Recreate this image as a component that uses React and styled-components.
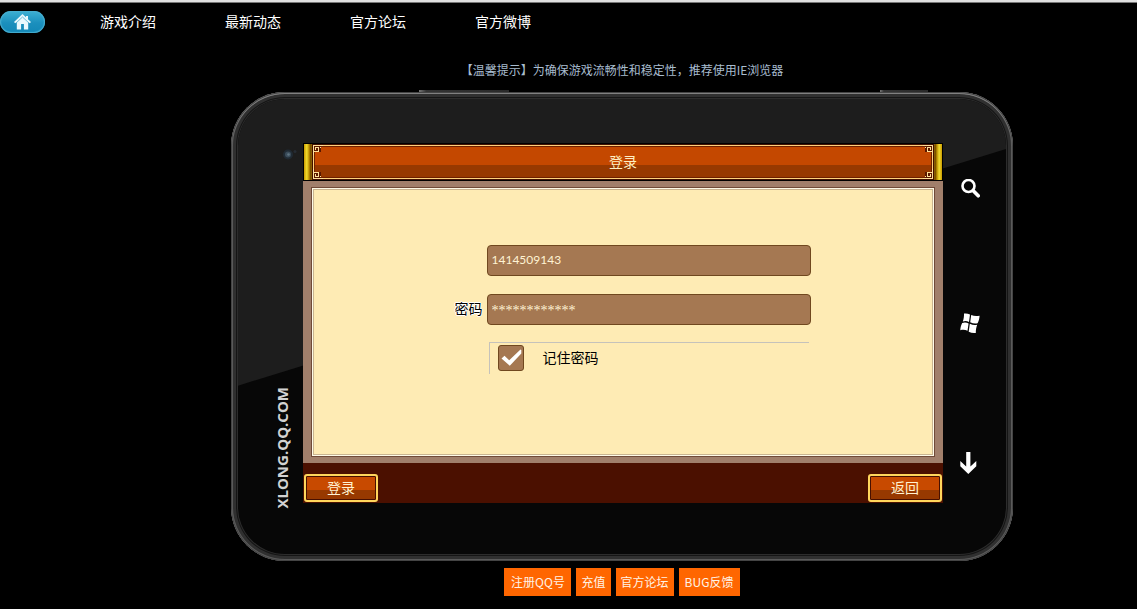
import React from "react";
import styled, { createGlobalStyle } from "styled-components";

const GlobalStyle = createGlobalStyle`
  * { box-sizing: border-box; }
  body {
    margin: 0;
    background: #000;
    color: #fff;
    font-family: "Noto Sans CJK SC", sans-serif;
    font-size: 14px;
  }
  a { color: inherit; text-decoration: none; }
`;

const Page = styled.div`
  border-top: 2px solid #e0e0e0;
  box-shadow: inset 0 1px 0 #777;
`;

const Nav = styled.nav`
  display: flex;
  align-items: center;
  height: 40px;
`;

const HomeLink = styled.a`
  display: flex;
  align-items: center;
  justify-content: center;
  width: 45px;
  height: 22px;
  margin-right: 55px;
  border-radius: 11px;
  background: linear-gradient(#3db0d3, #1b8fbd 55%, #1287b6);
  box-shadow: inset 0 0 1px 1px #48aed0;
`;

const NavLink = styled.a`
  width: 125px;
  padding-bottom: 2px;
  line-height: 20px;
`;

const Main = styled.main`
  display: flex;
  flex-direction: column;
  align-items: center;
  padding-left: 107px;
`;

const Tip = styled.p`
  margin: 18px 0 12px;
  font-size: 12px;
  line-height: 20px;
  color: #a8bccf;
`;

const Device = styled.section`
  position: relative;
  display: flex;
  width: 100%;
  max-width: 782px;
  padding: 51px 0 58px;
  border-radius: 54px;
  background: #070707;
  box-shadow:
    inset 0 0 0 1px #444,
    inset 0 1px 0 1px #808080,
    inset 0 0 0 2px #5a5a5a,
    inset 0 0 0 5px #303030,
    inset 0 0 0 6px #151515,
    inset 0 0 0 7px #2c2c2c;

  &::before {
    content: "";
    position: absolute;
    inset: 7px;
    border-radius: 47px;
    background: #1d1d1d;
    clip-path: polygon(0 0, 100% 0, 100% 11%, 0 63%);
  }
`;

const SideKey = styled.span`
  position: absolute;
  top: -2px;
  left: ${(p) => p.$left};
  width: ${(p) => p.$width};
  height: 2px;
  background: linear-gradient(90deg, #777, #333 8%, #2a2a2a);
`;

const LeftRail = styled.div`
  position: relative;
  display: flex;
  flex-direction: column;
  align-items: flex-end;
  justify-content: space-between;
  width: 72px;
  padding: 4px 6px 0 0;
`;

const Brand = styled.span`
  writing-mode: vertical-rl;
  transform: rotate(180deg);
  margin: 0 6px -6px 0;
  font-family: "Open Sans", sans-serif;
  font-size: 15px;
  font-weight: 700;
  line-height: 18px;
  color: #d2d2d2;
`;

const RightRail = styled.div`
  position: relative;
  display: flex;
  flex-direction: column;
  align-items: center;
  justify-content: space-between;
  width: 70px;
  padding: 36px 16px 29px 0;
`;

const Screen = styled.form`
  position: relative;
  display: flex;
  flex: 1;
  flex-direction: column;
  border-top: 1px solid #000;
  background: #a17f6b;
`;

const TitleBar = styled.header`
  display: flex;
  height: 37px;
  padding: 0 1px 1px;
  background: #000;
`;

const Pillar = styled.span`
  width: 8px;
  background: linear-gradient(${(p) => p.$to}, #c89a00, #f2dc2c 35%, #b88900 65%, #6b4600 85%, #9b6a00);
`;

const TitlePanel = styled.div`
  position: relative;
  flex: 1;
  border: 1px solid #421000;
  background: linear-gradient(#c44800 60%, #973900 60%);
  box-shadow: inset 0 0 0 1px #ffd27a, inset 0 0 0 2px #6e2000;
`;

const Title = styled.h1`
  margin: 0;
  font-size: 14px;
  font-weight: 400;
  line-height: 32px;
  text-align: center;
  color: #fff0c4;
`;

const CornerSvg = styled.svg`
  position: absolute;
  ${(p) => p.$v}: 0;
  ${(p) => p.$h}: 0;
  transform: scale(${(p) => (p.$h === "right" ? -1 : 1)}, ${(p) => (p.$v === "bottom" ? -1 : 1)});
`;

const Panel = styled.div`
  display: flex;
  justify-content: center;
  margin: 6px 8px;
  padding: 57px 0 82px 19px;
  border: 1px solid #704a38;
  background: #feebb4;
  box-shadow: inset 0 0 0 1px #fffbe8, inset 0 0 0 2px #c9b591;
`;

const Fields = styled.div`
  display: grid;
  grid-template-columns: 32px 324px;
  row-gap: 18px;
  align-items: center;
`;

const FieldLabel = styled.label`
  grid-column: 1;
  padding-bottom: 4px;
  line-height: 20px;
  color: #000;
  text-shadow: 1px 0 #fff, -1px 0 #fff, 0 1px #fff, 0 -1px #fff;
`;

const TextInput = styled.input`
  grid-column: 2;
  width: 100%;
  height: 31px;
  padding: ${(p) => (p.$masked ? "2px 4px 0" : "0 4px 2px")};
  border: 1px solid #70481f;
  border-radius: 4px;
  outline: none;
  background: #a57852;
  color: #fff3d2;
  font-family: ${(p) => (p.$masked ? '"Liberation Serif", serif' : "Lato, sans-serif")};
  font-size: ${(p) => (p.$masked ? "14px" : "12px")};
`;

const Remember = styled.div`
  grid-column: 2;
  display: flex;
  align-items: flex-start;
  gap: 19px;
  height: 32px;
  margin: -1px 2px 0;
  padding: 2px 0 0 8px;
  border-top: 1px solid #c5c2bb;
  border-left: 1px solid #c5c2bb;
  line-height: 24px;
  color: #000;
`;

const CheckWrap = styled.span`
  position: relative;
  display: flex;
`;

const CheckBox = styled.input`
  appearance: none;
  width: 26px;
  height: 26px;
  margin: 0;
  border: 1px solid #70481f;
  border-radius: 3px;
  background: #a57852;

  & + svg { display: none; }
  &:checked + svg { display: block; }
`;

const Tick = styled.svg`
  position: absolute;
  inset: 0;
  pointer-events: none;
`;

const ActionBar = styled.footer`
  display: flex;
  justify-content: space-between;
  padding: 11px 1px 1px;
  background: #4b1000;
`;

const ActionButton = styled.button`
  width: 74px;
  height: 28px;
  padding: 0 0 2px;
  border: 2px solid #ffd65c;
  border-radius: 3px;
  background: linear-gradient(#c84a00 60%, #973900 60%);
  box-shadow: inset 0 0 0 1px #481000;
  color: #fff3d2;
  font: 400 14px/20px "Noto Sans CJK SC", sans-serif;
`;

const Links = styled.nav`
  display: flex;
  gap: 5px;
  padding: 7px 0 12px;
`;

const LinkButton = styled.a`
  min-width: ${(p) => p.$min || "0"};
  padding: 0 5px;
  background: #ff6600;
  font-size: 12px;
  line-height: 28px;
  text-align: center;
  color: #fff3e6;
`;

const Corner = (props) => (
  <CornerSvg width="10" height="10" viewBox="0 0 10 10" fill="none" stroke="#ffe09a" shapeRendering="crispEdges" aria-hidden="true" {...props}>
    <rect width="8" height="7" fill="#5a1800" stroke="none" />
    <path d="M0 .5H10M.5 0V10M0 6.5H6M5.5 7V2M6 2.5H2M2.5 2V5M7.5 2V3" />
  </CornerSvg>
);

const HomeIcon = () => (
  <svg width="17" height="16" viewBox="0 0 17 16" aria-hidden="true">
    <path fill="#e9f8fd" d="M8.5 0 0 8l1.2 1.3L2.8 8v7.5h4.3V10h2.8v5.5h4.3V8l1.6 1.3L17 8l-3-2.8V2h-2v1.3z" />
    <path fill="none" stroke="#4eb0d1" strokeWidth=".8" d="M2.5 8.6 8.5 3l6 5.6" />
  </svg>
);

const SearchIcon = () => (
  <svg width="20" height="20" viewBox="0 0 20 20" fill="none" stroke="#fff" aria-hidden="true">
    <circle cx="8.5" cy="7" r="6" strokeWidth="2.6" />
    <path d="m13.5 12 4.7 4.8" strokeWidth="3.6" strokeLinecap="round" />
  </svg>
);

const WindowsIcon = () => (
  <svg width="20" height="25" viewBox="0 0 20 25" fill="#fff" aria-hidden="true">
    <path d="M4 .6C6 .2 8 .6 10 1.6L9 9C7 8 5 7.7 2.8 8.6 3.8 6 4.1 3.3 4 .6z" />
    <path d="M11.2 2c2.6 1.2 5.3 1.4 8.4.7-.2 2.8-.8 5.3-2 7.6-2.4.6-4.8.3-7.4-1z" />
    <path d="M2.2 10c2.2-.9 4.2-.6 6.4.4l-1.1 7.4c-2.2-1.1-4.6-1.3-7.2-.6C.4 14.7 1 12.3 2.2 10z" />
    <path d="M9.8 10.7c2.6 1.3 4.8 1.6 7.4 1-1 2.7-1.4 5.3-1.4 8.2-2.4.4-4.7 0-7.1-1.2z" />
  </svg>
);

const DownIcon = () => (
  <svg width="20" height="22" viewBox="0 0 20 22" aria-hidden="true">
    <path fill="#fff" d="M6.2 0h4.2v14.4L16.3 9v5.2L8.3 22 .3 14.2V9l5.9 5.4z" />
  </svg>
);

const CameraIcon = () => (
  <svg width="16" height="16" viewBox="0 0 16 16" aria-hidden="true">
    <circle cx="7" cy="7.5" r="5" fill="#202a33" />
    <circle cx="7" cy="7.5" r="3" fill="#3a4c5a" />
    <circle cx="7.5" cy="7.5" r="1.3" fill="#607482" />
    <circle cx="14" cy="4.5" r="1.5" fill="#262c34" />
  </svg>
);

const navItems = ["游戏介绍", "最新动态", "官方论坛", "官方微博"];

export default function App() {
  return (
    <Page>
      <GlobalStyle />
      <Nav>
        <HomeLink href="#home" aria-label="首页"><HomeIcon /></HomeLink>
        {navItems.map((item) => <NavLink href="#nav" key={item}>{item}</NavLink>)}
      </Nav>
      <Main>
        <Tip>【温馨提示】为确保游戏流畅性和稳定性，推荐使用IE浏览器</Tip>
        <Device>
          <SideKey $left="24%" $width="90px" />
          <SideKey $left="83%" $width="48px" />
          <LeftRail>
            <CameraIcon />
            <Brand>XLONG.QQ.COM</Brand>
          </LeftRail>
          <Screen onSubmit={(e) => e.preventDefault()}>
            <TitleBar>
              <Pillar $to="to right" />
              <TitlePanel>
                <Corner $v="top" $h="left" />
                <Corner $v="top" $h="right" />
                <Corner $v="bottom" $h="left" />
                <Corner $v="bottom" $h="right" />
                <Title>登录</Title>
              </TitlePanel>
              <Pillar $to="to left" />
            </TitleBar>
            <Panel>
              <Fields>
                <TextInput aria-label="QQ号" defaultValue="1414509143" />
                <FieldLabel htmlFor="password">密码</FieldLabel>
                <TextInput id="password" $masked defaultValue="************" autoComplete="off" />
                <Remember>
                  <CheckWrap>
                    <CheckBox type="checkbox" id="remember" defaultChecked />
                    <Tick viewBox="0 0 26 26" aria-hidden="true">
                      <path fill="#fff" d="m3.5 13.5 3-2.7 4.7 4.4L22.5 4.5l.8.5v3.5L11.8 20.8z" />
                    </Tick>
                  </CheckWrap>
                  <label htmlFor="remember">记住密码</label>
                </Remember>
              </Fields>
            </Panel>
            <ActionBar>
              <ActionButton type="submit">登录</ActionButton>
              <ActionButton type="button">返回</ActionButton>
            </ActionBar>
          </Screen>
          <RightRail>
            <SearchIcon />
            <WindowsIcon />
            <DownIcon />
          </RightRail>
        </Device>
        <Links>
          <LinkButton href="#register" $min="67px">注册QQ号</LinkButton>
          <LinkButton href="#pay">充值</LinkButton>
          <LinkButton href="#forum">官方论坛</LinkButton>
          <LinkButton href="#bug" $min="61px">BUG反馈</LinkButton>
        </Links>
      </Main>
    </Page>
  );
}
